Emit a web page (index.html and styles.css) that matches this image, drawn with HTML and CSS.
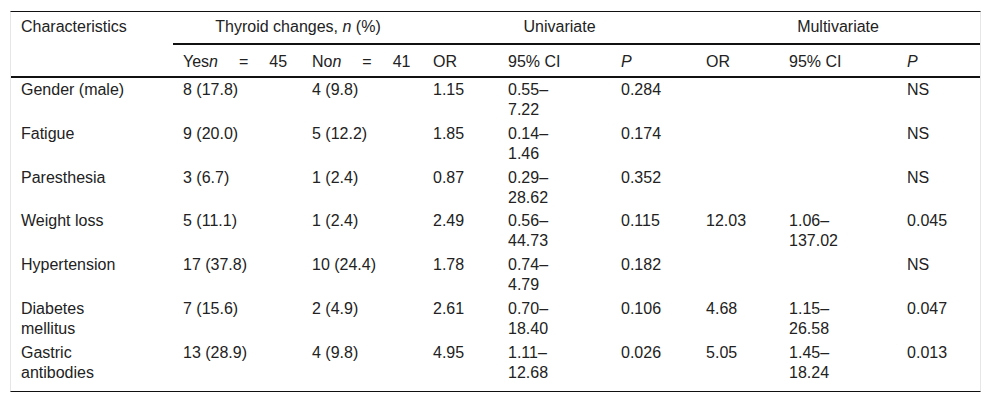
FILE: index.html
```html
<!DOCTYPE html>
<html lang="en">
<head>
<meta charset="utf-8">
<title>Thyroid changes table</title>
<link rel="stylesheet" href="styles.css">
</head>
<body>
<div class="wrap">
<table class="tbl">
  <colgroup>
    <col class="c1"><col class="c2"><col class="c3"><col class="c4"><col class="c5"><col class="c6"><col class="c7"><col class="c8"><col class="c9">
  </colgroup>
  <thead>
    <tr class="h1">
      <th rowspan="2" class="first">Characteristics</th>
      <th colspan="2" class="grp">Thyroid changes, <i>n</i> (%)</th>
      <th colspan="3" class="grp">Univariate</th>
      <th colspan="3" class="grp">Multivariate</th>
    </tr>
    <tr class="h2">
      <th>Yes<i>n</i><span class="eq1">=</span>45</th>
      <th>No<i>n</i><span class="eq1">=</span>41</th>
      <th>OR</th>
      <th>95% CI</th>
      <th><i>P</i></th>
      <th>OR</th>
      <th>95% CI</th>
      <th><i>P</i></th>
    </tr>
  </thead>
  <tbody>
    <tr><td class="first">Gender (male)</td><td>8 (17.8)</td><td>4 (9.8)</td><td>1.15</td><td>0.55–<wbr>7.22</td><td>0.284</td><td></td><td></td><td>NS</td></tr>
    <tr><td class="first">Fatigue</td><td>9 (20.0)</td><td>5 (12.2)</td><td>1.85</td><td>0.14–<wbr>1.46</td><td>0.174</td><td></td><td></td><td>NS</td></tr>
    <tr><td class="first">Paresthesia</td><td>3 (6.7)</td><td>1 (2.4)</td><td>0.87</td><td>0.29–<wbr>28.62</td><td>0.352</td><td></td><td></td><td>NS</td></tr>
    <tr><td class="first">Weight loss</td><td>5 (11.1)</td><td>1 (2.4)</td><td>2.49</td><td>0.56–<wbr>44.73</td><td>0.115</td><td>12.03</td><td>1.06–<wbr>137.02</td><td>0.045</td></tr>
    <tr><td class="first">Hypertension</td><td>17 (37.8)</td><td>10 (24.4)</td><td>1.78</td><td>0.74–<wbr>4.79</td><td>0.182</td><td></td><td></td><td>NS</td></tr>
    <tr><td class="first">Diabetes mellitus</td><td>7 (15.6)</td><td>2 (4.9)</td><td>2.61</td><td>0.70–<wbr>18.40</td><td>0.106</td><td>4.68</td><td>1.15–<wbr>26.58</td><td>0.047</td></tr>
    <tr class="last"><td class="first">Gastric antibodies</td><td>13 (28.9)</td><td>4 (9.8)</td><td>4.95</td><td>1.11–<wbr>12.68</td><td>0.026</td><td>5.05</td><td>1.45–<wbr>18.24</td><td>0.013</td></tr>
  </tbody>
</table>
</div>
</body>
</html>
```

FILE: styles.css
```css
html, body {
  margin: 0;
  padding: 0;
  background: #ffffff;
}

.wrap {
  padding: 11px 0 0 10px;
}

.tbl {
  width: 971px;
  table-layout: fixed;
  border-collapse: separate;
  border-spacing: 0;
  border-top: 1px solid #111;
  border-bottom: 1px solid #111;
  border-left: 1px solid #e6e6e6;
  border-right: 1px solid #e6e6e6;
  font-family: "Liberation Sans", Arial, sans-serif;
  font-size: 16px;
  line-height: 20px;
  color: #222;
}

.c1 { width: 162px; }
.c2 { width: 129px; }
.c3 { width: 121px; }
.c4 { width: 75px; }
.c5 { width: 113px; }
.c6 { width: 85px; }
.c7 { width: 83px; }
.c8 { width: 118px; }
.c9 { width: 83px; }

.tbl th {
  font-weight: normal;
  text-align: left;
  vertical-align: top;
  white-space: nowrap;
  padding: 5px 10px 6px 10px;
}

.tbl th.grp {
  text-align: center;
  border-bottom: 2px solid #111;
}

.tbl .h2 th {
  padding-top: 7px;
  padding-bottom: 4px;
}

.tbl .h2 th,
.tbl th.first {
  border-bottom: 2px solid #111;
}

.tbl td {
  vertical-align: top;
  text-align: left;
  padding: 2px 40px 1.8px 10px;
}

.tbl .last td {
  padding-bottom: 8px;
}

.eq1 {
  margin: 0 21px 0 21px;
}
```
